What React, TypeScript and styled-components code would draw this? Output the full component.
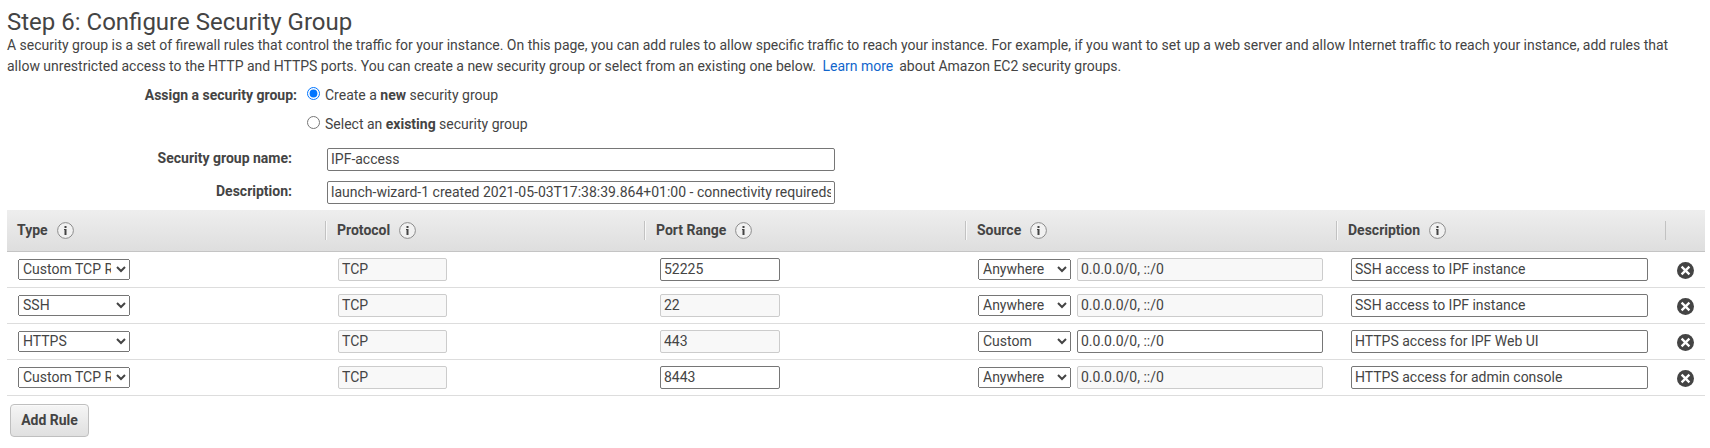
import React from 'react';
import styled, { createGlobalStyle } from 'styled-components';

const GlobalStyle = createGlobalStyle`
  *, *::before, *::after { box-sizing: border-box; }
  body {
    margin: 0;
    background: #fff;
    color: #444;
    font: 14px/21px Roboto, "Liberation Sans", sans-serif;
  }
`;

const Page = styled.main`
  padding: 9px 5px 0 7px;
`;

const Title = styled.h1`
  margin: 0;
  font-size: 24px;
  font-weight: 400;
  line-height: 26px;
`;

const Intro = styled.p`
  margin: 0;
  width: 1680px;
  word-spacing: -0.035px;
`;

const Link = styled.a`
  color: #1166cc;
  text-decoration: none;
  margin: 0 2.5px 0 3px;
`;

const Form = styled.form`
  display: flex;
  flex-direction: column;
`;

const Choices = styled.div`
  display: flex;
  height: 71px;
  padding-top: 8px;
`;

const ChoiceLabel = styled.div`
  width: 290px;
  text-align: right;
  font-weight: 700;
`;

const ChoiceList = styled.div`
  display: flex;
  flex-direction: column;
  gap: 8px;
  padding-left: 10px;
`;

const Choice = styled.label`
  display: flex;
  height: 21px;
`;

const Radio = styled.input`
  width: 13px;
  height: 13px;
  margin: 2px 5px 0 0;
`;

const Field = styled.div`
  display: flex;
  height: 23px;
  margin-bottom: 10px;

  &:last-child { margin-bottom: 6px; }
`;

const FieldLabel = styled.label`
  width: 285px;
  margin-right: 35px;
  text-align: right;
  font-weight: 700;
`;

const TextInput = styled.input<{ $width: number }>`
  width: ${(p) => p.$width}px;
  height: 23px;
  padding: 0 3px 2px;
  border: 1px solid #767676;
  border-radius: 2px;
  background: #fff;
  color: #444;
  font: inherit;

  &:disabled {
    border-color: #ccc;
    background: #f8f8f8;
  }
`;

const Select = styled.select<{ $width: number }>`
  width: ${(p) => p.$width}px;
  height: 21px;
  padding: 0 2px 2px 0;
  color: #444;
  font-family: inherit;
  font-size: 14px;
`;

const Table = styled.div`
  display: flex;
  flex-direction: column;
`;

const HeaderRow = styled.div`
  display: grid;
  grid-template-columns: 318px 319px 321px 371px 329px 40px;
  align-items: center;
  height: 42px;
  border-bottom: 1px solid #c4c4c4;
  background: linear-gradient(#eee, #dedede);
`;

const HeaderCell = styled.div`
  display: flex;
  align-items: center;
  gap: 9px;
  height: 19px;
  padding-left: 11px;
  border-left: 1px solid #c2c2c2;
  box-shadow: inset 1px 0 #f8f8f8;
  font-weight: 700;

  &:first-child {
    padding-left: 10px;
    border-left: 0;
    box-shadow: none;
  }

  &:last-child { box-shadow: none; }
`;

const Row = styled.div`
  display: grid;
  grid-template-columns: 318px 320px 320px 372px 328px 40px;
  align-items: center;
  height: 36px;
  border-bottom: 1px solid #ddd;
`;

const Cell = styled.div<{ $inset: number }>`
  display: flex;
  align-items: center;
  gap: 6px;
  padding-left: ${(p) => p.$inset}px;
`;

const RemoveButton = styled.button`
  display: flex;
  width: 17px;
  height: 17px;
  margin-top: 2px;
  padding: 0;
  border: 0;
  background: none;
`;

const AddButton = styled.button`
  width: 79px;
  height: 33px;
  margin: 8px 0 0 3px;
  padding: 0;
  border: 1px solid #bfbfbf;
  border-radius: 4px;
  background: linear-gradient(#f5f5f5, #e0e0e0);
  box-shadow: inset 0 1px #fafafa;
  color: #444;
  font: inherit;
  font-weight: 700;
`;

const InfoIcon = () => (
  <svg width="17" height="17" viewBox="0 0 17 17">
    <circle cx="8.5" cy="8.5" r="7.9" fill="#f1f1f1" stroke="#8c8c8c" />
    <path d="M7.5 4h2v2h-2zM7 7h2.5v6h-2V8H7z" fill="#444" />
  </svg>
);

const RemoveIcon = () => (
  <svg width="17" height="17" viewBox="0 0 17 17">
    <circle cx="8.5" cy="8.5" r="8.5" fill="#444" />
    <path d="M4.6 4.6l7.8 7.8M12.4 4.6l-7.8 7.8" stroke="#fff" strokeWidth="2.3" />
  </svg>
);

interface Rule {
  type: string;
  port: string;
  customPort: boolean;
  source: string;
  description: string;
}

const rules: Rule[] = [
  { type: 'Custom TCP Rule', port: '52225', customPort: true, source: 'Anywhere', description: 'SSH access to IPF instance' },
  { type: 'SSH', port: '22', customPort: false, source: 'Anywhere', description: 'SSH access to IPF instance' },
  { type: 'HTTPS', port: '443', customPort: false, source: 'Custom', description: 'HTTPS access for IPF Web UI' },
  { type: 'Custom TCP Rule', port: '8443', customPort: true, source: 'Anywhere', description: 'HTTPS access for admin console' },
];

const headings = ['Type', 'Protocol', 'Port Range', 'Source', 'Description'];

export default function App() {
  return (
    <Page>
      <GlobalStyle />
      <Title>Step 6: Configure Security Group</Title>
      <Intro>
        A security group is a set of firewall rules that control the traffic for your instance. On this page, you can
        add rules to allow specific traffic to reach your instance. For example, if you want to set up a web server and
        allow Internet traffic to reach your instance, add rules that allow unrestricted access to the HTTP and HTTPS
        ports. You can create a new security group or select from an existing one below. <Link>Learn more</Link> about
        Amazon EC2 security groups.
      </Intro>
      <Form>
        <Choices>
          <ChoiceLabel>Assign a security group:</ChoiceLabel>
          <ChoiceList>
            <Choice>
              <Radio type="radio" name="group" defaultChecked />
              <span>Create a <b>new</b> security group</span>
            </Choice>
            <Choice>
              <Radio type="radio" name="group" />
              <span>Select an <b>existing</b> security group</span>
            </Choice>
          </ChoiceList>
        </Choices>
        <Field>
          <FieldLabel htmlFor="name">Security group name:</FieldLabel>
          <TextInput id="name" $width={508} defaultValue="IPF-access" />
        </Field>
        <Field>
          <FieldLabel htmlFor="description">Description:</FieldLabel>
          <TextInput
            id="description"
            $width={508}
            defaultValue="launch-wizard-1 created 2021-05-03T17:38:39.864+01:00 - connectivity requireds"
          />
        </Field>
      </Form>
      <Table>
        <HeaderRow>
          {headings.map((heading) => (
            <HeaderCell key={heading}>
              {heading}
              <InfoIcon />
            </HeaderCell>
          ))}
          <HeaderCell />
        </HeaderRow>
        {rules.map((rule) => (
          <Row key={rule.port}>
            <Cell $inset={11}>
              <Select $width={112}>
                <option>{rule.type}</option>
              </Select>
            </Cell>
            <Cell $inset={13}>
              <TextInput $width={109} defaultValue="TCP" disabled />
            </Cell>
            <Cell $inset={15}>
              <TextInput $width={120} defaultValue={rule.port} disabled={!rule.customPort} />
            </Cell>
            <Cell $inset={13}>
              <Select $width={93}>
                <option>{rule.source}</option>
              </Select>
              <TextInput $width={246} defaultValue="0.0.0.0/0, ::/0" disabled={rule.source !== 'Custom'} />
            </Cell>
            <Cell $inset={14}>
              <TextInput $width={297} defaultValue={rule.description} />
            </Cell>
            <Cell $inset={12}>
              <RemoveButton type="button" aria-label="Remove rule">
                <RemoveIcon />
              </RemoveButton>
            </Cell>
          </Row>
        ))}
      </Table>
      <AddButton type="button">Add Rule</AddButton>
    </Page>
  );
}
